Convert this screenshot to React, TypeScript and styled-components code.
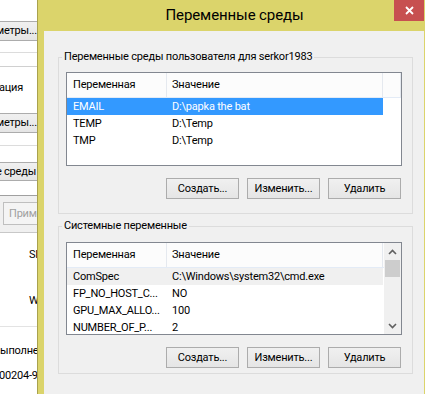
import styled, { createGlobalStyle } from 'styled-components';

const FONT = `Roboto, 'Noto Sans', 'DejaVu Sans', sans-serif`;

const GlobalStyle = createGlobalStyle`
    html, body {
        margin: 0;
        padding: 0;
    }
    body {
        width: 425px;
        height: 394px;
        overflow: hidden;
        background: #ffffff;
    }
`;

const Screen = styled.div`
    display: flex;
    width: 425px;
    height: 394px;
    overflow: hidden;
    background: #ffffff;
    font-family: ${FONT};
    font-size: 11px;
    letter-spacing: -0.2px;
    color: #000000;
`;

/* ---------- window behind the dialog (only a sliver is visible) ---------- */

const BackWindow = styled.div`
    width: 37px;
    flex-shrink: 0;
    overflow: hidden;
`;

const BackInner = styled.div`
    width: 250px;
    margin-left: -200px;
    display: flex;
    flex-direction: column;
`;

const TabPanel = styled.div`
    display: flex;
    flex-direction: column;
    height: 196px;
    box-sizing: border-box;
    padding-top: 21px;
    border-bottom: 1px solid #a0a0a0;
    background: #ffffff;
`;

const BackButton = styled.div<{ $top: number; $height: number; $right: number }>`
    margin-top: ${(p) => p.$top}px;
    height: ${(p) => p.$height}px;
    box-sizing: border-box;
    border: 1px solid #acacac;
    border-right: none;
    background: linear-gradient(#f0f0f0, #e5e5e5);
    text-align: right;
    padding-right: ${(p) => p.$right}px;
    line-height: ${(p) => p.$height - 2}px;
    white-space: nowrap;
`;

const Rule = styled.div<{ $top: number; $color?: string }>`
    margin-top: ${(p) => p.$top}px;
    height: 1px;
    background: ${(p) => p.$color || '#dcdcdc'};
`;

const BackText = styled.div<{ $top: number; $left?: number; $right?: number }>`
    margin-top: ${(p) => p.$top}px;
    line-height: 16px;
    white-space: nowrap;
    text-align: ${(p) => (p.$right !== undefined ? 'right' : 'left')};
    padding-left: ${(p) => p.$left || 0}px;
    padding-right: ${(p) => p.$right || 0}px;
`;

const FooterStrip = styled.div`
    height: 37px;
    box-sizing: border-box;
    padding-top: 6px;
    background: #f0f0f0;
    border-bottom: 1px solid #c8c8c8;
`;

const DisabledButton = styled.div`
    margin-left: 203px;
    width: 75px;
    height: 23px;
    box-sizing: border-box;
    border: 1px solid #bfbfbf;
    background: #f4f4f4;
    color: #a0a0a0;
    padding-left: 5px;
    line-height: 21px;
    white-space: nowrap;
`;

const SystemPane = styled.div`
    display: flex;
    flex-direction: column;
    background: #ffffff;
`;

/* ---------- the dialog ---------- */

const Dialog = styled.div`
    width: 393px;
    height: 394px;
    flex-shrink: 0;
    display: flex;
    flex-direction: column;
    background: #dbd46b;
    border-left: 1px solid #a9a24e;
`;

const TitleBar = styled.div`
    height: 31px;
    flex-shrink: 0;
    display: grid;
    grid-template-columns: 1fr auto 1fr;
    align-items: start;
`;

const Title = styled.div`
    grid-column: 2;
    font-size: 15px;
    letter-spacing: -0.1px;
    line-height: 31px;
    color: #000000;
    white-space: nowrap;
`;

const CloseButton = styled.div`
    grid-column: 3;
    justify-self: end;
    margin-right: 7px;
    width: 30px;
    height: 21px;
    background: #c75050;
    display: flex;
    align-items: center;
    justify-content: center;
`;

const Client = styled.div`
    flex: 1;
    margin: 0 7px 0 6px;
    padding: 18px 0 0 14px;
    background: #f0f0f0;
    display: flex;
    flex-direction: column;
`;

const GroupBox = styled.fieldset<{ $top: number; $gap: number; $bottom: number }>`
    margin: ${(p) => p.$top}px 0 0 0;
    width: 355px;
    box-sizing: border-box;
    min-inline-size: auto;
    border: 1px solid #dcdcdc;
    padding: ${(p) => p.$gap}px 10px ${(p) => p.$bottom}px 7px;
`;

const GroupLabel = styled.legend`
    margin-left: -4px;
    padding: 0 2px;
    line-height: 16px;
    white-space: nowrap;
`;

const ListView = styled.div<{ $height: number }>`
    width: 336px;
    height: ${(p) => p.$height}px;
    box-sizing: border-box;
    border: 1px solid #828790;
    background: #ffffff;
    display: flex;
    overflow: hidden;
`;

const ListBody = styled.div`
    flex: 1;
    display: flex;
    flex-direction: column;
    min-width: 0;
`;

const ListHeader = styled.div`
    display: grid;
    grid-template-columns: 100px 216px 1fr;
    height: 25px;
    box-sizing: border-box;
    background: #fcfcfc;
    border-bottom: 1px solid #e3ebf6;
    flex-shrink: 0;
`;

const HeaderCell = styled.div<{ $pad: number }>`
    padding-left: ${(p) => p.$pad}px;
    line-height: 24px;
    border-right: 1px solid #e5e9ef;
    white-space: nowrap;
    overflow: hidden;
`;

const Row = styled.div<{ $state?: 'selected' | 'inactive' }>`
    display: grid;
    grid-template-columns: 100px 216px;
    height: 17px;
    flex-shrink: 0;
    background: ${(p) =>
        p.$state === 'selected' ? '#3399ff' : p.$state === 'inactive' ? '#f0f0f0' : 'transparent'};
    color: ${(p) => (p.$state === 'selected' ? '#ffffff' : '#000000')};
    width: 316px;
`;

const Cell = styled.div<{ $pad: number }>`
    padding-left: ${(p) => p.$pad}px;
    line-height: 17px;
    white-space: nowrap;
    overflow: hidden;
`;

const ScrollBar = styled.div`
    width: 17px;
    flex-shrink: 0;
    background: #f0f0f0;
    display: flex;
    flex-direction: column;
`;

const ScrollArrow = styled.div`
    height: 17px;
    display: flex;
    align-items: center;
    justify-content: center;
`;

const ScrollTrack = styled.div`
    flex: 1;
    padding: 0 1px;
`;

const ScrollThumb = styled.div`
    height: 17px;
    background: #cdcdcd;
`;

const ButtonRow = styled.div`
    display: flex;
    justify-content: flex-end;
    gap: 8px;
    margin-top: 12px;
    padding-right: 1px;
`;

const PushButton = styled.button`
    width: 73px;
    height: 21px;
    box-sizing: border-box;
    border: 1px solid #acacac;
    border-radius: 0;
    background: linear-gradient(#f0f0f0, #e5e5e5);
    font-family: ${FONT};
    font-size: 11px;
    letter-spacing: -0.2px;
    color: #000000;
    padding: 0;
    line-height: 19px;
    white-space: nowrap;
`;

type Variable = { name: string; value: string; state?: 'selected' | 'inactive' };

const userVars: Variable[] = [
    { name: 'EMAIL', value: 'D:\\papka the bat', state: 'selected' },
    { name: 'TEMP', value: 'D:\\Temp' },
    { name: 'TMP', value: 'D:\\Temp' },
];

const systemVars: Variable[] = [
    { name: 'ComSpec', value: 'C:\\Windows\\system32\\cmd.exe', state: 'inactive' },
    { name: 'FP_NO_HOST_C...', value: 'NO' },
    { name: 'GPU_MAX_ALLO...', value: '100' },
    { name: 'NUMBER_OF_P...', value: '2' },
    { name: 'OS', value: 'Windows_NT' },
];

const Chevron = ({ up }: { up?: boolean }) => (
    <svg width="9" height="6" viewBox="0 0 9 6">
        <path
            d={up ? 'M1 5 L4.5 1.5 L8 5' : 'M1 1 L4.5 4.5 L8 1'}
            fill="none"
            stroke="#606060"
            strokeWidth="1.6"
        />
    </svg>
);

const VariableList = ({
    items,
    height,
    scroll,
}: {
    items: Variable[];
    height: number;
    scroll?: boolean;
}) => (
    <ListView $height={height}>
        <ListBody>
            <ListHeader>
                <HeaderCell $pad={6}>Переменная</HeaderCell>
                <HeaderCell $pad={5}>Значение</HeaderCell>
                {!scroll && <HeaderCell $pad={0} />}
            </ListHeader>
            {items.map((v) => (
                <Row key={v.name} $state={v.state}>
                    <Cell $pad={6}>{v.name}</Cell>
                    <Cell $pad={5}>{v.value}</Cell>
                </Row>
            ))}
        </ListBody>
        {scroll && (
            <ScrollBar>
                <ScrollArrow>
                    <Chevron up />
                </ScrollArrow>
                <ScrollTrack>
                    <ScrollThumb />
                </ScrollTrack>
                <ScrollArrow>
                    <Chevron />
                </ScrollArrow>
            </ScrollBar>
        )}
    </ListView>
);

const Buttons = () => (
    <ButtonRow>
        <PushButton>Создать...</PushButton>
        <PushButton>Изменить...</PushButton>
        <PushButton>Удалить</PushButton>
    </ButtonRow>
);

const App = () => (
    <>
        <GlobalStyle />
        <Screen>
            <BackWindow>
                <BackInner>
                    <TabPanel>
                        <BackButton $top={0} $height={20} $right={13}>
                            Параметры...
                        </BackButton>
                        <Rule $top={11} />
                        <Rule $top={13} $color="#d0d0d0" />
                        <BackText $top={13} $right={27}>
                            отладочная информация
                        </BackText>
                        <BackButton $top={17} $height={20} $right={13}>
                            Параметры...
                        </BackButton>
                        <Rule $top={12} />
                        <BackButton $top={16} $height={19} $right={14}>
                            Переменные среды
                        </BackButton>
                    </TabPanel>
                    <FooterStrip>
                        <DisabledButton>Применить</DisabledButton>
                    </FooterStrip>
                    <SystemPane>
                        <BackText $top={14} $left={229}>
                            SIMPLE
                        </BackText>
                        <BackText $top={30} $left={229}>
                            Windows
                        </BackText>
                        <Rule $top={17} $color="#e3e3e3" />
                        <BackText $top={16} $left={194}>
                            выполнена
                        </BackText>
                        <BackText $top={9} $left={199}>
                            00204-98
                        </BackText>
                    </SystemPane>
                </BackInner>
            </BackWindow>

            <Dialog>
                <TitleBar>
                    <Title>Переменные среды</Title>
                    <CloseButton>
                        <svg width="9" height="9" viewBox="0 0 9 9">
                            <path
                                d="M1 1 L8 8 M8 1 L1 8"
                                stroke="#ffffff"
                                strokeWidth="1.8"
                            />
                        </svg>
                    </CloseButton>
                </TitleBar>
                <Client>
                    <GroupBox $top={0} $gap={7} $bottom={14}>
                        <GroupLabel>
                            Переменные среды пользователя для serkor1983
                        </GroupLabel>
                        <VariableList items={userVars} height={94} />
                        <Buttons />
                    </GroupBox>
                    <GroupBox $top={4} $gap={8} $bottom={5}>
                        <GroupLabel>Системные переменные</GroupLabel>
                        <VariableList items={systemVars} height={93} scroll />
                        <Buttons />
                    </GroupBox>
                </Client>
            </Dialog>
        </Screen>
    </>
);

export default App;
